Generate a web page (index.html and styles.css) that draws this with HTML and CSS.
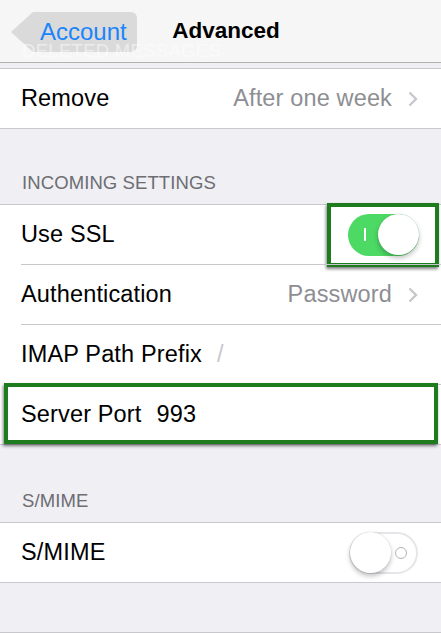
FILE: index.html
```html
<!DOCTYPE html>
<html lang="en">
<head>
<meta charset="utf-8">
<title>Advanced</title>
<link rel="stylesheet" href="styles.css">
</head>
<body>
<header class="nav">
  <div class="back">
    <svg class="back-shape" viewBox="0 0 126 40" width="126" height="40" aria-hidden="true"><path d="M0 20 L22 0 H120 A6 6 0 0 1 126 6 V34 A6 6 0 0 1 120 40 H22 Z" fill="#dadada"/></svg>
    <span class="back-label">Account</span>
  </div>
  <h1 class="title">Advanced</h1>
  <span class="ghost">DELETED MESSAGES</span>
</header>
<main class="content">
  <section class="group group-first">
    <div class="cell">
      <span class="label">Remove</span>
      <span class="value">After one week</span>
      <svg class="chevron" viewBox="0 0 10 16" width="10" height="16" aria-hidden="true"><path d="M1.5 1.5 L8 8 L1.5 14.5" fill="none" stroke="#c7c7cc" stroke-width="2.4"/></svg>
    </div>
  </section>
  <h2 class="section-header header-incoming">INCOMING SETTINGS</h2>
  <section class="group">
    <div class="cell">
      <span class="label">Use SSL</span>
      <span class="toggle toggle-on"><span class="mark-on"></span><span class="knob"></span></span>
      <span class="highlight highlight-toggle"></span>
    </div>
    <div class="cell">
      <span class="label">Authentication</span>
      <span class="value">Password</span>
      <svg class="chevron" viewBox="0 0 10 16" width="10" height="16" aria-hidden="true"><path d="M1.5 1.5 L8 8 L1.5 14.5" fill="none" stroke="#c7c7cc" stroke-width="2.4"/></svg>
    </div>
    <div class="cell">
      <span class="label">IMAP Path Prefix</span>
      <span class="field field-placeholder">/</span>
    </div>
    <div class="cell">
      <span class="label">Server Port</span>
      <span class="field">993</span>
      <span class="highlight highlight-row"></span>
    </div>
  </section>
  <h2 class="section-header header-smime">S/MIME</h2>
  <section class="group">
    <div class="cell">
      <span class="label">S/MIME</span>
      <span class="toggle toggle-off"><span class="knob"></span><span class="mark-off"></span></span>
    </div>
  </section>
  <div class="group-next"></div>
</main>
</body>
</html>
```
FILE: styles.css
```css
* { box-sizing: border-box; }
html, body { margin: 0; padding: 0; }
body {
  background: #efeff4;
  font-family: "Liberation Sans", Arial, sans-serif;
  color: #000;
  width: 441px;
  height: 633px;
  overflow: hidden;
}
.nav {
  position: relative;
  height: 63px;
  background: #f6f6f6;
  border-bottom: 1px solid #b2b2b2;
  display: grid;
  grid-template-columns: 1fr auto 1fr;
  align-items: center;
  padding: 0 0 0 11px;
}
.back {
  position: relative;
  width: 126px;
  height: 40px;
  display: flex;
  align-items: center;
  margin-top: 1px;
}
.back-shape { position: absolute; left: 0; top: 0; }
.back-label {
  position: relative;
  padding-left: 29px;
  font-size: 24px;
  line-height: 20px;
  color: #1a84fb;
}
.title {
  margin: 0;
  font-size: 22.5px;
  line-height: 22px;
  font-weight: bold;
  color: #000;
}
.ghost {
  position: absolute;
  left: 22px;
  top: 45px;
  font-size: 18.5px;
  line-height: 12px;
  color: rgba(255, 255, 255, 0.5);
  letter-spacing: 0.3px;
}
.content { display: flex; flex-direction: column; }
.group {
  background: #fff;
  border-top: 1px solid #c8c7cc;
  border-bottom: 1px solid #c8c7cc;
}
.group-first { margin-top: 5px; }
.cell {
  position: relative;
  height: 59px;
  display: flex;
  align-items: center;
  padding: 0 22px 0 21px;
  font-size: 23.5px;
}
.cell + .cell { height: 60px; border-top: 1px solid #fff; }
.cell + .cell::before {
  content: "";
  position: absolute;
  left: 21px;
  right: 0;
  top: -1px;
  height: 1px;
  background: #c8c7cc;
}
.label { flex: 0 0 auto; letter-spacing: 0.15px; }
.value {
  margin-left: auto;
  color: #8e8e93;
  letter-spacing: 0.15px;
}
.chevron { margin-left: 16px; margin-right: 1px; flex: 0 0 auto; }
.field { margin-left: 15px; letter-spacing: 0.15px; }
.field-placeholder { color: #c7c7cc; }
.section-header {
  margin: 0;
  font-weight: normal;
  font-size: 18.5px;
  line-height: 22px;
  color: #6d6d72;
  padding: 0 21px 10px 22px;
  letter-spacing: 0.1px;
}
.header-incoming { padding-top: 43px; }
.header-smime { padding-top: 45px; }
.toggle {
  position: relative;
  margin-left: auto;
  width: 71px;
  height: 42px;
  border-radius: 21px;
  flex: 0 0 auto;
}
.toggle-on { background: #4cd964; }
.toggle-off { background: #fff; border: 2px solid #e5e5ea; width: 69px; margin-right: 1px; }
.knob {
  position: absolute;
  top: 0;
  width: 41px;
  height: 41px;
  border-radius: 50%;
  background: #fff;
  box-shadow: 0 3px 5px rgba(0, 0, 0, 0.25), 0 0 0 0.5px rgba(0, 0, 0, 0.08);
}
.toggle-on .knob { right: 0; top: 0.5px; }
.toggle-off .knob { left: -1px; top: -2px; }
.mark-on {
  position: absolute;
  left: 16px;
  top: 14px;
  width: 2px;
  height: 13px;
  background: #fff;
}
.mark-off {
  position: absolute;
  right: 9px;
  top: 13px;
  width: 12px;
  height: 12px;
  border: 1.6px solid #b4b4b4;
  border-radius: 50%;
}
.highlight {
  position: absolute;
  border: 4px solid #1e7b1e;
  box-shadow: -1px 2px 3px rgba(0, 0, 0, 0.5);
  pointer-events: none;
}
.highlight-toggle { left: 327px; top: -2px; width: 112px; height: 64px; }
.highlight-row { left: 4px; top: -2px; width: 434px; height: 61px; }
.group-next {
  margin-top: 49px;
  border-top: 1px solid #c8c7cc;
  height: 20px;
  background: #efeff4;
}
```
